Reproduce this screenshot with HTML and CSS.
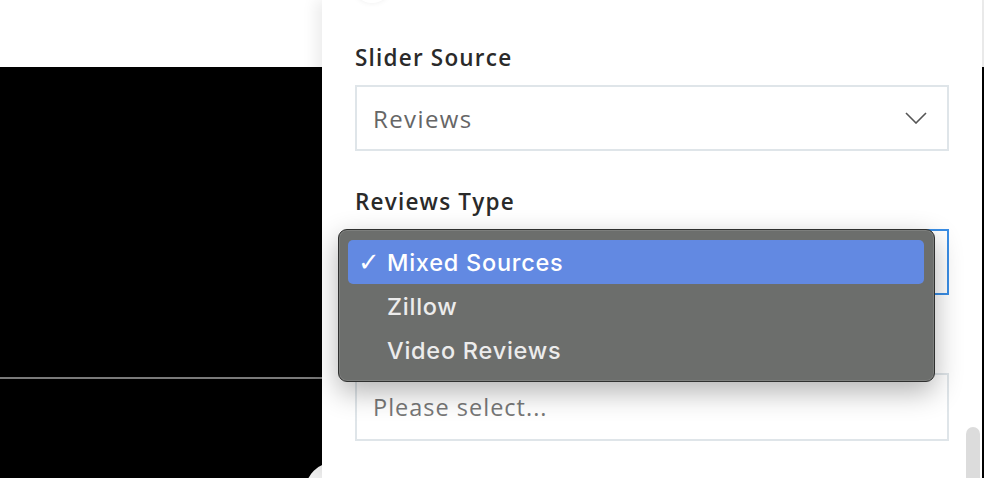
FILE: index.html
```html
<!DOCTYPE html>
<html>
<head>
<meta charset="utf-8">
<link rel="stylesheet" href="styles.css">
</head>
<body>
<div class="page">
  <div class="left">
    <div class="left-top"></div>
    <div class="left-black">
      <div class="video-top"></div>
      <div class="video-line"></div>
      <div class="video-bottom"></div>
    </div>
    <div class="corner-circle"></div>
  </div>
  <div class="panel">
    <div class="avatar"></div>
    <div class="group first">
      <div class="label">Slider Source</div>
      <div class="select">
        <span class="value">Reviews</span>
        <svg class="chev" width="22" height="12" viewBox="0 0 22 12"><path d="M1 1 L11 11 L21 1" fill="none" stroke="#555" stroke-width="1.6"/></svg>
      </div>
    </div>
    <div class="group">
      <div class="label">Reviews Type</div>
      <div class="select focused"></div>
    </div>
    <div class="group">
      <div class="label"></div>
      <div class="select tall">
        <span class="value placeholder">Please select...</span>
      </div>
    </div>
    <div class="scroll-thumb"></div>
  </div>
  <div class="right-strip">
    <div class="strip-top"></div>
    <div class="strip-black"></div>
  </div>
</div>
<div class="menu">
  <div class="item selected"><span class="check">✓</span><span>Mixed Sources</span></div>
  <div class="item"><span class="check"></span><span>Zillow</span></div>
  <div class="item"><span class="check"></span><span>Video Reviews</span></div>
</div>
</body>
</html>
```

FILE: styles.css
```css
html, body {
  margin: 0;
  padding: 0;
  width: 984px;
  height: 478px;
  overflow: hidden;
  background: #fff;
}
.page {
  display: flex;
  width: 984px;
  height: 478px;
  position: relative;
  overflow: hidden;
}
.left {
  width: 322px;
  flex: none;
  display: flex;
  flex-direction: column;
  position: relative;
}
.left-top {
  height: 67px;
  background: #fff;
}
.left-black {
  flex: 1;
  background: #000;
  display: flex;
  flex-direction: column;
}
.video-top {
  height: 310px;
}
.video-line {
  height: 2px;
  background: #7a7a7a;
}
.video-bottom {
  flex: 1;
}
.corner-circle {
  position: absolute;
  left: 305px;
  top: 462px;
  width: 60px;
  height: 60px;
  border-radius: 50%;
  background: #f2f2f2;
}
.panel {
  width: 660px;
  height: 478px;
  flex: none;
  background: #fff;
  position: relative;
  z-index: 1;
  box-shadow: -6px 0 14px rgba(0, 0, 0, 0.08);
  padding: 0 33px;
  box-sizing: border-box;
  font-family: "Open Sans", "Lato", sans-serif;
  overflow: hidden;
}
.avatar {
  width: 40px;
  height: 40px;
  border-radius: 50%;
  margin: -37px 0 0 -3px;
  background: #fff;
  box-shadow: 0 1px 5px rgba(0, 0, 0, 0.05);
}
.group {
  display: flex;
  flex-direction: column;
  padding-top: 36px;
}
.group.first {
  padding-top: 40px;
}
.label {
  height: 30px;
  line-height: 30px;
  font-size: 22.5px;
  font-weight: 600;
  color: #2a2a2a;
  margin-bottom: 12px;
  letter-spacing: 1.2px;
}
.select {
  height: 66px;
  box-sizing: border-box;
  border: 2px solid #dfe5e9;
  display: flex;
  align-items: center;
  justify-content: space-between;
  padding: 0 20px 0 16px;
  width: 594px;
}
.select.tall {
  height: 68px;
}
.select.focused {
  border-color: #3a8ee6;
}
.value {
  font-size: 24px;
  color: #666;
  letter-spacing: 1.4px;
}
.placeholder {
  color: #777;
  font-size: 23.5px;
  letter-spacing: 1px;
}
.chev {
  display: block;
}
.scroll-thumb {
  position: absolute;
  left: 644px;
  top: 427px;
  width: 14px;
  height: 51px;
  border-radius: 7px 7px 0 0;
  background: #dcdcdc;
}
.right-strip {
  width: 2px;
  flex: none;
  display: flex;
  flex-direction: column;
}
.strip-top {
  height: 67px;
  background: #ececec;
}
.strip-black {
  flex: 1;
  background: #000;
}
.menu {
  position: absolute;
  left: 338px;
  top: 229px;
  width: 597px;
  height: 153px;
  box-sizing: border-box;
  border: 1px solid #2f302f;
  border-radius: 9px;
  background: #6c6e6c;
  box-shadow: 0 10px 28px rgba(0, 0, 0, 0.3), inset 0 0 0 1px rgba(255,255,255,0.12);
  padding: 10px 10px 0 9px;
  z-index: 5;
  font-family: "Inter", "Roboto", sans-serif;
}
.item {
  height: 44px;
  display: flex;
  align-items: center;
  border-radius: 5px;
  color: #ececec;
  font-size: 23.5px;
  font-weight: 500;
  letter-spacing: 0.75px;
}
.item.selected {
  background: #6289e2;
  color: #fff;
}
.check {
  width: 39px;
  padding-left: 10px;
  box-sizing: border-box;
  flex: none;
  font-size: 26px;
  font-family: "DejaVu Sans", sans-serif;
  font-weight: 700;
}
```
